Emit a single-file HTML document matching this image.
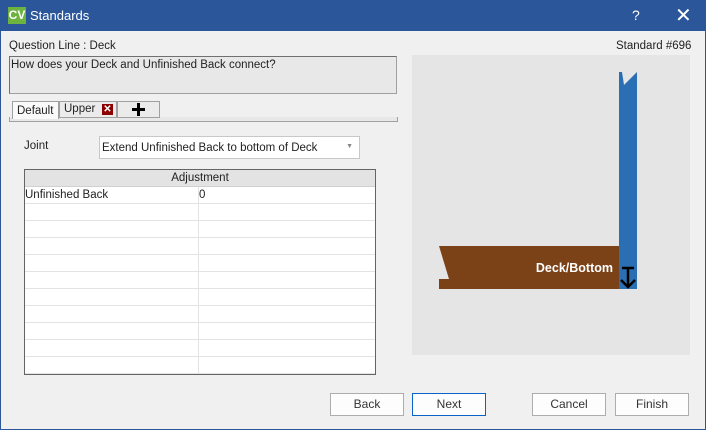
<!DOCTYPE html>
<html><head><style>
*{margin:0;padding:0;box-sizing:border-box}
body{width:706px;height:430px;overflow:hidden;background:#f0f0f0;font-family:"Liberation Sans",sans-serif;font-size:12px;color:#222;position:relative}
.a{position:absolute}
.btn{position:absolute;top:393px;width:74px;height:23px;border:1px solid #adadad;background:#fdfdfd;text-align:center;line-height:21px;font-size:12px;color:#333}
</style></head><body>
<div class="a" style="left:0;top:0;width:706px;height:430px;border:1px solid #2b579a;border-top:none"></div>
<div class="a" style="left:0;top:0;width:706px;height:31px;background:#2b579a;color:#fff">
 <div class="a" style="left:8px;top:7px;width:18px;height:17px;background:#6db33f;color:#fff;font-weight:bold;font-size:12px;line-height:17px;text-align:center">CV</div>
 <div class="a" style="left:30px;top:8px;font-size:13px">Standards</div>
 <div class="a" style="left:632px;top:7px;font-size:14px">?</div>
 <div class="a" style="left:675px;top:3px;font-size:20px;font-weight:300">✕</div>
</div>
<div class="a" style="left:9px;top:40px;font-size:11.5px">Question Line : Deck</div>
<div class="a" style="left:616px;top:40px;font-size:11.5px">Standard #696</div>
<div class="a" style="left:9px;top:56px;width:388px;height:38px;background:#e8e8e8;border:1px solid #a0a0a0;border-top-color:#707070;border-left-color:#707070;padding:2px 1px;font-size:11.5px">How does your Deck and Unfinished Back connect?</div>
<div class="a" style="left:9px;top:117px;width:389px;height:5px;border:1px solid #a0a0a0;border-top:none;background:#e8e8e8"></div>
<div class="a" style="left:12px;top:101px;width:47px;height:18px;background:#fafafa;border:1px solid #a0a0a0;border-bottom:none;font-size:11.5px;padding:3px 0 0 4px">Default</div>
<div class="a" style="left:59px;top:101px;width:58px;height:17px;background:#ebebeb;border:1px solid #a0a0a0;padding:1px 0 0 4px;font-size:11.5px">Upper</div>
<div class="a" style="left:102px;top:104px;width:11px;height:11px;background:#8b0000;color:#fff;font-size:10px;line-height:11px;text-align:center;font-weight:bold">✕</div>
<div class="a" style="left:117px;top:101px;width:43px;height:17px;background:#ebebeb;border:1px solid #a0a0a0"></div>
<div class="a" style="left:132px;top:108px;width:13px;height:3px;background:#000"></div>
<div class="a" style="left:137px;top:103px;width:3px;height:13px;background:#000"></div>
<div class="a" style="left:24px;top:140px;font-size:11.5px">Joint</div>
<div class="a" style="left:99px;top:136px;width:261px;height:23px;background:#fff;border:1px solid #c8c8c8;padding:5px 0 0 2px;font-size:11.5px">Extend Unfinished Back to bottom of Deck<span style="position:absolute;right:6px;top:6px;font-size:7px;color:#888">▼</span></div>
<div class="a" style="left:24px;top:169px;width:352px;height:206px;border:1px solid #646464;background:#fff;overflow:hidden;font-size:11.5px">
 <div style="height:17px;background:#e3e3e3;border-bottom:1px solid #d0d0d0;text-align:center;line-height:17px">Adjustment</div>
 <div class="a" style="left:173px;top:17px;width:1px;height:200px;background:#e3e3e3"></div>
 <div style="height:17px;border-bottom:1px solid #e3e3e3;line-height:16px;position:relative">Unfinished Back<span style="position:absolute;left:174px">0</span></div>
 <div style="height:17px;border-bottom:1px solid #e3e3e3"></div><div style="height:17px;border-bottom:1px solid #e3e3e3"></div><div style="height:17px;border-bottom:1px solid #e3e3e3"></div><div style="height:17px;border-bottom:1px solid #e3e3e3"></div><div style="height:17px;border-bottom:1px solid #e3e3e3"></div><div style="height:17px;border-bottom:1px solid #e3e3e3"></div><div style="height:17px;border-bottom:1px solid #e3e3e3"></div><div style="height:17px;border-bottom:1px solid #e3e3e3"></div><div style="height:17px;border-bottom:1px solid #e3e3e3"></div><div style="height:17px;border-bottom:1px solid #e3e3e3"></div>
</div>
<svg class="a" style="left:412px;top:55px" width="278" height="300">
 <rect width="278" height="300" fill="#e5e5e5"/>
 <polygon points="207,17 210,17 212,30 225,17 225,234 207,234" fill="#2a6fb3"/>
 <polygon points="27,191 207,191 207,234 27,234 27,224 37,224" fill="#7b4218"/>
 <text x="201" y="217" text-anchor="end" fill="#fff" font-family="Liberation Sans" font-weight="bold" font-size="12.5">Deck/Bottom</text>
 <path d="M210,213 H222 M216,213 V232 M209,225 L216,232 L223,225" stroke="#000" stroke-width="2.5" fill="none"/>
</svg>
<div class="btn" style="left:330px">Back</div>
<div class="btn" style="left:412px;border-color:#0a64c8">Next</div>
<div class="btn" style="left:532px">Cancel</div>
<div class="btn" style="left:615px">Finish</div>
</body></html>
